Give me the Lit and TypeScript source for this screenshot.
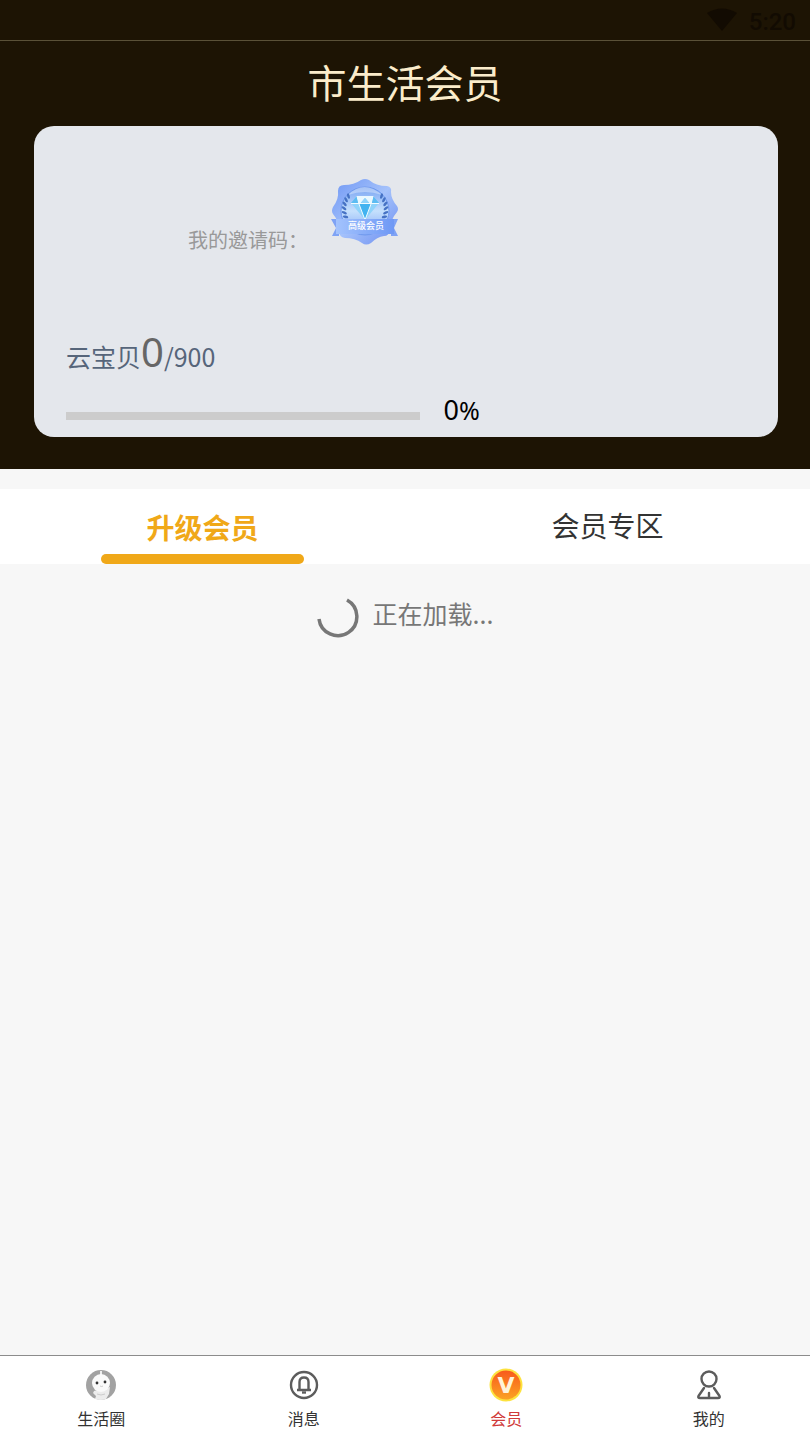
import { html, svg, css, LitElement } from 'lit';
import { customElement, property, state } from 'lit/decorators.js';
import { classMap } from 'lit/directives/class-map.js';

const leaves = [0, 1, 2, 3, 4, 5];

@customElement('status-bar')
export class StatusBar extends LitElement {
	static styles = css`
        :host {
            display: flex;
            justify-content: flex-end;
            align-items: center;
            gap: 12px;
            box-sizing: border-box;
            height: 41px;
            padding-right: 14px;
            border-bottom: 1px solid #5a5138;
            color: #120b02;
            font: 500 24px/40px Roboto, sans-serif;
        }

        svg {
            width: 30px;
            height: 24px;
        }

        .time {
            padding-top: 3px;
        }
    `;

	render() {
		return html`
            <svg viewBox="0 0 30 24" aria-hidden="true"><path d="M0 5Q15 -4 30 5L15 23Z" fill="currentColor"/></svg>
            <span class="time">5:20</span>`;
	}
}

@customElement('member-badge')
export class MemberBadge extends LitElement {
	static styles = css`
        :host, svg {
            display: block;
            width: 70px;
            height: 68px;
        }

        .label {
            font: 500 9px "Noto Sans CJK SC", sans-serif;
        }
    `;

	render() {
		return html`
            <svg viewBox="0 0 70 68" role="img" aria-label="高级会员">
                <defs>
                    <linearGradient id="star" x1="0" y1="0" x2="1" y2="1">
                        <stop offset="0" stop-color="#6f97f4"/>
                        <stop offset=".5" stop-color="#a5c2fb"/>
                        <stop offset="1" stop-color="#6a8cf0"/>
                    </linearGradient>
                    <linearGradient id="disc" x1="0" y1="0" x2="0" y2="1">
                        <stop offset="0" stop-color="#78a4f2"/>
                        <stop offset=".5" stop-color="#c5e0fd"/>
                        <stop offset="1" stop-color="#7fa6f5"/>
                    </linearGradient>
                    <linearGradient id="ribbon" x1="0" y1="0" x2="1" y2="0">
                        <stop offset="0" stop-color="#a3c3fd"/>
                        <stop offset="1" stop-color="#6e98f5"/>
                    </linearGradient>
                </defs>
                <path d="M31 2Q35 0 39 2Q46 8 57 8Q62 9 61 14Q61 21 67 28Q69 31 67 34Q60 42 60 52Q59 58 54 58Q47 59 41 65Q36 68 32 65Q25 60 15 60Q9 59 9 53Q9 43 3 36Q1 33 3 29Q9 21 8 13Q8 7 14 7Q24 7 31 2Z" fill="url(#star)"/>
                <circle cx="35" cy="33" r="24" fill="url(#disc)" stroke="#6f99ee"/>
                <path d="M18 17Q34 1 52 17Q35 11 18 17Z" fill="#fff" opacity=".35"/>
                ${leaves.map(i => svg`
                    <ellipse cx="0" cy="-21" rx="1.3" ry="2.8" transform="translate(35 31) rotate(${-52 - i * 12}) rotate(35 0 -21)" fill="#4672c4"/>
                    <ellipse cx="0" cy="-21" rx="1.3" ry="2.8" transform="translate(35 31) rotate(${52 + i * 12}) rotate(-35 0 -21)" fill="#4672c4"/>`)}
                <path d="M27 18H43L49 25L35 42L21 25Z" fill="#8fd3fa"/>
                <path d="M27 18L21 25L29 26ZM43 18L49 25L41 26Z" fill="#5cbcf2"/>
                <path d="M27 18H43L41 26L35 19L29 26Z" fill="#e8f8ff"/>
                <path d="M29 26H41L35 42Z" fill="#42b3f0"/>
                <path d="M27 18L29 26L35 19L41 26L43 18M21 25.500H49M29 26L35 42L41 26" fill="none" stroke="#f2fbff"/>
                <path d="M1 41H9V58H2L6 50ZM68 41H61V58H68L64 50Z" fill="#7fa3f5"/>
                <path d="M6 41H64V56H6Z" fill="url(#ribbon)"/>
                <text class="label" x="36" y="51" text-anchor="middle" fill="#fff">高级会员</text>
            </svg>`;
	}
}

@customElement('member-card')
export class MemberCard extends LitElement {
	static styles = css`
        :host {
            display: block;
            box-sizing: border-box;
            margin: 0 32px 0 34px;
            padding: 52px 32px 9px;
            border-radius: 20px;
            background-color: #e4e7ec;
        }

        .invite {
            display: flex;
            align-items: flex-start;
            gap: 22px;
            padding-left: 122px;
            color: #999;
            font-size: 20px;
            line-height: 28px;
        }

        .code {
            padding-top: 48px;
        }

        .points {
            height: 60px;
            margin: 72px 0 0;
            color: #56657a;
            font-size: 25px;
            line-height: 60px;
        }

        .current {
            color: #666;
            font-family: "Noto Sans", sans-serif;
            font-size: 40px;
            line-height: 48px;
        }

        .progress {
            display: grid;
            grid-template-columns: 52% auto;
            align-items: center;
            gap: 24px;
            margin-top: 10px;
        }

        .track {
            height: 8px;
            margin-top: 8px;
            background-color: #ccc;
        }

        .fill {
            height: 100%;
            background-color: #f0a818;
        }

        .percent {
            height: 32px;
            color: #000;
            font-family: "Noto Sans", sans-serif;
            font-size: 25px;
            line-height: 28px;
        }

        .number {
            font-size: 27px;
        }
    `;

	@property({ type: Number })
	points = 0;

	@property({ type: Number })
	goal = 900;

	render() {
		const percent = Math.round(this.points / this.goal * 100);
		return html`
            <div class="invite">
                <span class="code">我的邀请码：</span>
                <member-badge></member-badge>
            </div>
            <p class="points">云宝贝<span class="current">${this.points}</span>/${this.goal}</p>
            <div class="progress">
                <div class="track" role="progressbar" aria-label="云宝贝" aria-valuenow=${percent}>
                    <div class="fill" style="width: ${percent}%"></div>
                </div>
                <span class="percent"><span class="number">${percent}</span>%</span>
            </div>`;
	}
}

@customElement('member-tabs')
export class MemberTabs extends LitElement {
	static styles = css`
        :host {
            display: flex;
            margin-top: 20px;
            background-color: #fff;
        }

        .tab {
            flex: 1;
            display: flex;
            flex-direction: column;
            align-items: center;
            height: 75px;
            padding: 16px 0 0;
            border: 0;
            background: none;
            color: #333;
            font: inherit;
            font-size: 28px;
            line-height: 40px;
            cursor: pointer;
        }

        .tab.active {
            padding-top: 18px;
            color: #f0a818;
            font-weight: 700;
        }

        .active::after {
            content: '';
            width: 50%;
            height: 10px;
            margin-top: auto;
            border-radius: 5px;
            background-color: #f0a818;
        }
    `;

	@state()
	private selected = 0;

	render() {
		return html`${['升级会员', '会员专区'].map((name, i) => html`
            <button class=${classMap({ tab: true, active: i === this.selected })} @click=${() => this.selected = i}>${name}</button>`)}`;
	}
}

@customElement('bottom-nav')
export class BottomNav extends LitElement {
	static styles = css`
        :host {
            display: flex;
            border-top: 1px solid #8c8c8c;
            background-color: #fff;
        }

        .item {
            flex: 1;
            display: flex;
            flex-direction: column;
            align-items: center;
            gap: 4px;
            height: 84px;
            box-sizing: border-box;
            padding-top: 12px;
            color: #333;
            font-size: 16px;
            line-height: 24px;
            text-decoration: none;
        }

        .item.active {
            color: #d03a3a;
        }

        svg {
            width: 34px;
            height: 34px;
        }

        .v {
            font: 700 22px "DejaVu Sans", sans-serif;
        }
    `;

	private items = [
		{
			name: '生活圈',
			icon: svg`
                <circle cx="17" cy="17" r="15" fill="#a2a2a2"/>
                <path d="M16 3H18V7H16Z" fill="#eee"/>
                <path d="M10 23L13 22H21L23 20L26 19L25 26L22 31Q17 33 11 31L12 28L9 25Z" fill="#ececec"/>
                <ellipse cx="17" cy="15" rx="9" ry="9" fill="#fafafa"/>
                <circle cx="13" cy="15" r="1.4" fill="#333"/>
                <circle cx="21" cy="14" r="1.4" fill="#333"/>
                <path d="M16 18Q18 19 19 18M13 26Q17 28 21 26" fill="none" stroke="#ccc"/>`,
		},
		{
			name: '消息',
			icon: svg`
                <g fill="none" stroke="#5c5c5c" stroke-width="2.400">
                    <circle cx="17" cy="17" r="13"/>
                    <path d="M10 22H24M12.500 22V14Q12.500 9.500 17 9.500Q21.500 9.500 21.500 14V22"/>
                    <path d="M15 24.500H19"/>
                </g>`,
		},
		{
			name: '会员',
			icon: svg`
                <defs>
                    <linearGradient id="coin" x1="0" y1="0" x2="0" y2="1">
                        <stop offset="0" stop-color="#f85a1c"/>
                        <stop offset="1" stop-color="#fba324"/>
                    </linearGradient>
                </defs>
                <circle cx="17" cy="17" r="16.500" fill="#fde23e"/>
                <circle cx="17" cy="17" r="14.500" fill="url(#coin)"/>
                <text class="v" x="17" y="25" text-anchor="middle" fill="#fff3d8">V</text>`,
		},
		{
			name: '我的',
			icon: svg`
                <g fill="none" stroke="#5c5c5c" stroke-width="2.400" stroke-linecap="round" stroke-linejoin="round">
                    <circle cx="17" cy="11" r="7.500"/>
                    <path d="M12 20L6.500 28Q5.500 30 8 30H26Q28.500 30 27.500 28L22 20M17 25V29"/>
                </g>`,
		},
	];

	render() {
		return html`${this.items.map((item, i) => html`
            <a class=${classMap({ item: true, active: i === 2 })} href="#">
                <svg viewBox="0 0 34 34" aria-hidden="true">${item.icon}</svg>
                <span>${item.name}</span>
            </a>`)}`;
	}
}

@customElement('app-root')
export class AppRoot extends LitElement {
	static styles = css`
        :host {
            display: flex;
            flex-direction: column;
            min-height: 100vh;
            background-color: #f7f7f7;
            font-family: "Noto Sans CJK SC", sans-serif;
        }

        .top {
            padding-bottom: 32px;
            background-color: #1d1404;
        }

        h1 {
            margin: 0;
            padding: 13px 0 17px;
            color: #fbeccb;
            font-size: 39px;
            font-weight: 400;
            line-height: 55px;
            text-align: center;
        }

        main {
            flex: 1;
        }

        .loading {
            display: flex;
            justify-content: center;
            gap: 14px;
            padding-top: 32px;
            color: #777;
            font-size: 25px;
            line-height: 34px;
        }

        .spinner {
            width: 42px;
            height: 42px;
        }
    `;

	render() {
		return html`
            <header class="top">
                <status-bar></status-bar>
                <h1>市生活会员</h1>
                <member-card></member-card>
            </header>
            <main>
                <member-tabs></member-tabs>
                <div class="loading" role="status">
                    <svg class="spinner" viewBox="0 0 42 42" aria-hidden="true">
                        <path d="M30 4A19 19 0 1 1 2 23" fill="none" stroke="#777" stroke-width="3.500"/>
                    </svg>
                    <span>正在加载...</span>
                </div>
            </main>
            <bottom-nav></bottom-nav>`;
	}
}

declare global {
	interface HTMLElementTagNameMap {
		"status-bar": StatusBar,
		"member-badge": MemberBadge,
		"member-card": MemberCard,
		"member-tabs": MemberTabs,
		"bottom-nav": BottomNav,
		"app-root": AppRoot,
	}
}
